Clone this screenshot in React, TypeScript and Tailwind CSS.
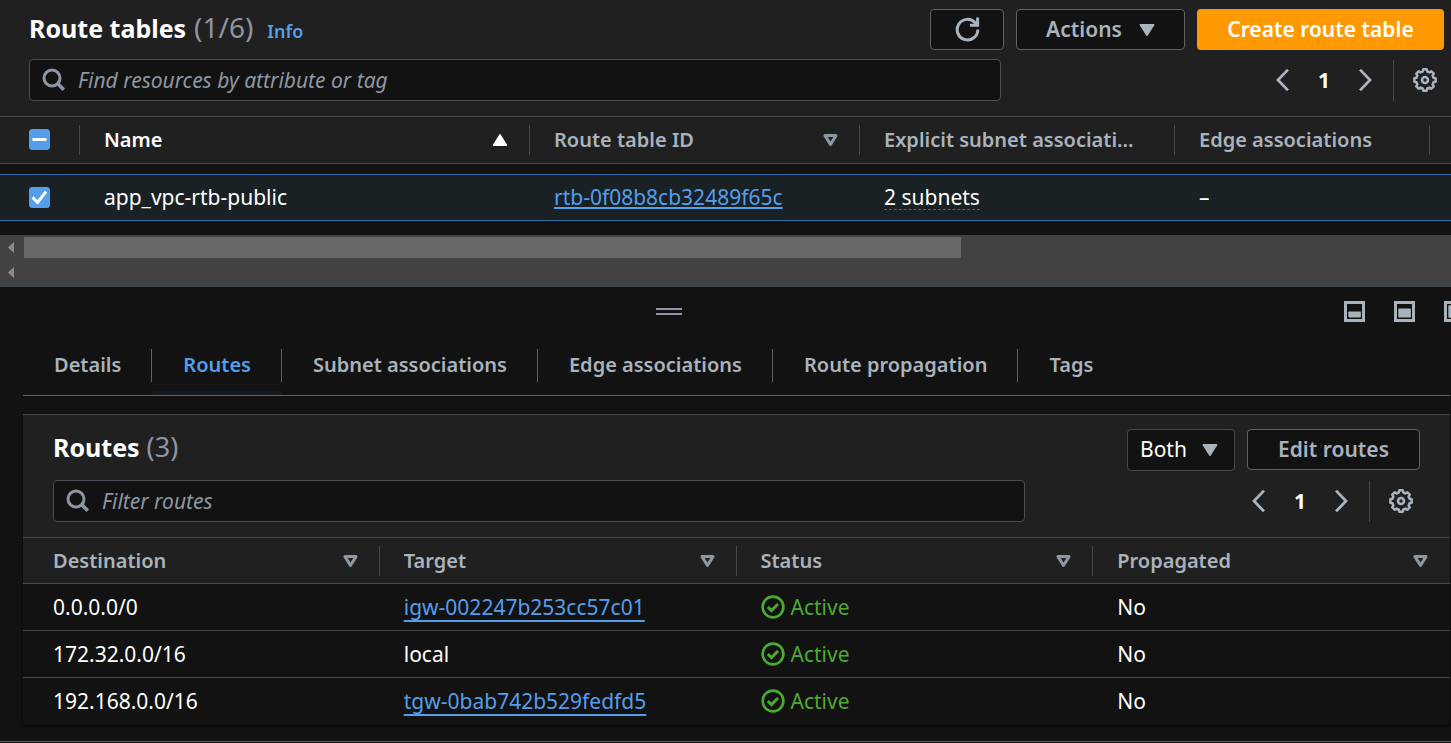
import { useEffect, useRef } from 'react';
import type { ReactNode } from 'react';

const GEAR_POINTS = Array.from({ length: 8 }, (_, i) => i * 45)
  .flatMap((a) => [
    [a - 9, 10.8],
    [a + 9, 10.8],
    [a + 15, 8.8],
    [a + 30, 8.8],
  ])
  .map(([deg, r]) => {
    const t = ((deg - 90) * Math.PI) / 180;
    return `${(12 + r * Math.cos(t)).toFixed(2)},${(12 + r * Math.sin(t)).toFixed(2)}`;
  })
  .join(' ');

function GearIcon() {
  return (
    <svg width="24" height="24" viewBox="0 0 24 24" fill="none" stroke="#a9b3bd" strokeWidth="2.5" strokeLinejoin="round" aria-hidden="true">
      <polygon points={GEAR_POINTS} />
      <circle cx="12" cy="12" r="3" strokeWidth="2.6" />
    </svg>
  );
}

function RefreshIcon() {
  return (
    <svg width="25" height="25" viewBox="0 0 25 25" fill="none" stroke="#a9b3bd" strokeWidth="3" aria-hidden="true">
      <path d="M22.8 12.5A10.3 10.3 0 1 1 20.2 5.8L22.4 8" />
      <path d="M22.6 0.6V8.2H15" />
    </svg>
  );
}

function SearchIcon() {
  return (
    <svg className="shrink-0" width="24" height="24" viewBox="0 0 24 24" fill="none" stroke="#8d96a3" strokeWidth="3" aria-hidden="true">
      <circle cx="10" cy="10" r="8" />
      <path d="M15.6 15.6L21.8 21.8" strokeWidth="3.6" />
    </svg>
  );
}

function Caret({ className = '' }: { className?: string }) {
  return (
    <svg className={className} width="16" height="14" viewBox="0 0 16 14" fill="#a9b3bd" stroke="#a9b3bd" strokeWidth="1.6" strokeLinejoin="round" aria-hidden="true">
      <path d="M1.4 1.8H14.6L8 12.2Z" />
    </svg>
  );
}

function SortIcon({ active = false }: { active?: boolean }) {
  return active ? (
    <svg className="shrink-0" width="16" height="14" viewBox="0 0 16 14" fill="#fff" stroke="#fff" strokeWidth="1.6" strokeLinejoin="round" aria-hidden="true">
      <path d="M1.6 12.2H14.4L8 1.8Z" />
    </svg>
  ) : (
    <svg className="shrink-0" width="15" height="14" viewBox="0 0 15 14" fill="none" stroke="#8d96a3" strokeWidth="3" strokeLinejoin="round" aria-hidden="true">
      <path d="M2 2.6H13L7.5 11.4Z" />
    </svg>
  );
}

function StatusIcon() {
  return (
    <svg className="shrink-0" width="24" height="24" viewBox="0 0 24 24" fill="none" stroke="#4caa31" strokeWidth="2.6" aria-hidden="true">
      <circle cx="12" cy="12" r="10.4" />
      <path d="M6.8 12L10.4 15.6L17 9" strokeWidth="2.9" />
    </svg>
  );
}

function Chevron({ dir }: { dir: 'left' | 'right' }) {
  return (
    <svg width="13" height="24" viewBox="0 0 13 24" fill="none" stroke="#a9b3bd" strokeWidth="2.8" aria-hidden="true">
      <path d={dir === 'left' ? 'M12 1.6L2 12L12 22.4' : 'M1 1.6L11 12L1 22.4'} />
    </svg>
  );
}

function PanelIcon({ top, height, label }: { top: number; height: number; label: string }) {
  return (
    <button type="button" aria-label={label} className="shrink-0">
      <svg width="21" height="21" viewBox="0 0 21 21" aria-hidden="true">
        <rect x="1.5" y="1.5" width="18" height="18" fill="none" stroke="#a9b3bd" strokeWidth="3" />
        <rect x="4.3" y={top} width="12.6" height={height} rx="0.8" fill="#a9b3bd" />
      </svg>
    </button>
  );
}

function Checkbox({ label, checked, mixed = false }: { label: string; checked?: boolean; mixed?: boolean }) {
  const ref = useRef<HTMLInputElement>(null);
  useEffect(() => {
    if (ref.current) ref.current.indeterminate = mixed;
  }, [mixed]);
  return (
    <span className="ml-[29px] grid w-[21px]">
      <input
        ref={ref}
        type="checkbox"
        aria-label={label}
        defaultChecked={checked}
        className="col-start-1 row-start-1 size-[21px] appearance-none rounded-[3px] border border-[#8d96a3] checked:border-[#539fec] checked:bg-[#539fec] indeterminate:border-[#539fec] indeterminate:bg-[#539fec]"
      />
      {(checked || mixed) && (
        <svg className="pointer-events-none col-start-1 row-start-1" width="21" height="21" viewBox="0 0 21 21" fill="none" stroke="#fff" strokeWidth="3" aria-hidden="true">
          <path d={mixed ? 'M3.5 10.5H17.5' : 'M3.6 10.4L8.6 15.4L17 4.6'} />
        </svg>
      )}
    </span>
  );
}

function SearchBox({ placeholder }: { placeholder: string }) {
  return (
    <label className="flex h-[42px] w-full max-w-[972px] items-center gap-3 rounded-sm border border-[#4a4d52] bg-[#121212] px-3">
      <SearchIcon />
      <input
        type="text"
        aria-label={placeholder}
        placeholder={placeholder}
        className="w-full bg-transparent text-[21px] leading-7 italic text-white outline-none placeholder:text-[#8d96a3] placeholder:opacity-100"
      />
    </label>
  );
}

function Pager() {
  return (
    <div className="flex shrink-0 items-center pr-[7px]">
      <button type="button" aria-label="Previous page">
        <Chevron dir="left" />
      </button>
      <button type="button" className="w-[70px] text-[21px] leading-7 font-bold text-white">
        1
      </button>
      <button type="button" aria-label="Next page">
        <Chevron dir="right" />
      </button>
      <div className="ml-[21px] h-[41px] border-l border-[#47494d] pl-[19px]" />
      <button type="button" aria-label="Preferences">
        <GearIcon />
      </button>
    </div>
  );
}

const BUTTON = 'flex h-[41px] items-center justify-center rounded-sm border border-[#5f6368] bg-[#121212] text-[21px] font-semibold text-[#a9b3bd]';

function HeaderCell({ children, first = false, sort, muted = true }: { children: ReactNode; first?: boolean; sort?: 'none' | 'asc'; muted?: boolean }) {
  return (
    <th scope="col" className="h-[46px] p-0 text-left font-semibold">
      <div
        className={`flex h-[30px] items-center justify-between gap-2 border-r border-[#47494d] ${first ? 'pl-[30px]' : 'pl-6'} ${sort ? 'pr-[21px]' : 'pr-4'} text-xl ${muted ? 'text-[#a9b3bd]' : 'text-white'}`}
      >
        <span className="truncate">{children}</span>
        {sort && <SortIcon active={sort === 'asc'} />}
      </div>
    </th>
  );
}

const TABS = ['Details', 'Routes', 'Subnet associations', 'Edge associations', 'Route propagation', 'Tags'];

const ROUTES = [
  { destination: '0.0.0.0/0', target: 'igw-002247b253cc57c01', link: true },
  { destination: '172.32.0.0/16', target: 'local', link: false },
  { destination: '192.168.0.0/16', target: 'tgw-0bab742b529fedfd5', link: true },
];

function ScrollArrow() {
  return (
    <svg width="6" height="11" viewBox="0 0 6 11" fill="#8b8b8b" aria-hidden="true">
      <path d="M6 0V11L0 5.5Z" />
    </svg>
  );
}

function RouteTables() {
  return (
    <section className="bg-[#202020]">
      <div className="flex flex-col gap-[9px] pt-[9px] pr-[7px] pb-[15px] pl-[29px]">
        <div className="flex items-start justify-between">
          <div className="flex items-baseline leading-9">
            <h1 className="text-[25px] font-bold text-white">Route tables</h1>
            <span className="ml-2 text-[28px] text-[#8d96a3]">(1/6)</span>
            <a href="#info" className="ml-3.5 text-lg font-semibold text-[#539fec]">
              Info
            </a>
          </div>
          <div className="flex gap-3">
            <button type="button" aria-label="Refresh" className={`${BUTTON} w-[74px]`}>
              <RefreshIcon />
            </button>
            <button type="button" className={`${BUTTON} w-[169px] gap-[17px]`}>
              Actions
              <Caret />
            </button>
            <button type="button" className="h-[41px] w-[247px] rounded-sm bg-[#ff9900] text-[21px] font-semibold text-white">
              Create route table
            </button>
          </div>
        </div>
        <div className="flex items-center justify-between">
          <SearchBox placeholder="Find resources by attribute or tag" />
          <Pager />
        </div>
      </div>
      <div className="h-[119px] overflow-hidden border-t border-[#47494d]">
        <table className="w-full table-fixed border-collapse">
          <colgroup>
            <col className="w-20" />
            <col className="w-[450px]" />
            <col className="w-[330px]" />
            <col className="w-[315px]" />
            <col className="w-[255px]" />
            <col />
          </colgroup>
          <thead>
            <tr className="border-b border-[#47494d]">
              <th scope="col" className="h-[46px] p-0">
                <div className="flex h-[30px] items-center border-r border-[#47494d]">
                  <Checkbox label="Select all route tables" mixed />
                </div>
              </th>
              <HeaderCell sort="asc" muted={false}>Name</HeaderCell>
              <HeaderCell sort="none">Route table ID</HeaderCell>
              <HeaderCell>Explicit subnet associati...</HeaderCell>
              <HeaderCell>Edge associations</HeaderCell>
              <td />
            </tr>
          </thead>
          <tbody className="bg-[#121212] text-[21px] leading-7 text-white">
            <tr className="h-[11px]">
              <td colSpan={6} className="p-0" />
            </tr>
            <tr className="border-y border-[#2f6aa3] bg-[#1a2124]">
              <td className="h-[46px] p-0">
                <Checkbox label="Select app_vpc-rtb-public" checked />
              </td>
              <td className="py-0 pr-0 pl-6">app_vpc-rtb-public</td>
              <td className="py-0 pr-0 pl-6">
                <a href="#rtb-0f08b8cb32489f65c" className="text-[#539fec] underline decoration-2 underline-offset-2 [text-decoration-skip-ink:none]">
                  rtb-0f08b8cb32489f65c
                </a>
              </td>
              <td className="py-0 pr-0 pl-6">
                <button type="button" className="border-b border-dashed border-[#5f6368] leading-6">
                  2 subnets
                </button>
              </td>
              <td className="py-0 pr-0 pl-6">–</td>
              <td />
            </tr>
            <tr>
              <td className="pt-3.5 pb-3 pl-0">
                <Checkbox label="Select next route table" />
              </td>
              <td colSpan={5} />
            </tr>
          </tbody>
        </table>
      </div>
      <div className="h-[52px] border-b-2 border-[#40474e] bg-[#424242]">
        <div className="flex h-[25px] items-center gap-2.5 pl-2">
          <ScrollArrow />
          <div className="h-[21px] w-[937px] bg-[#686868]" />
        </div>
        <div className="flex h-[25px] items-center pl-2">
          <ScrollArrow />
        </div>
      </div>
    </section>
  );
}

function RouteDetails() {
  return (
    <section className="bg-[#121212]">
      <div className="flex h-12 items-center">
        <div className="flex min-w-0 flex-1 justify-center">
          <button type="button" aria-label="Resize panel" className="flex h-[7px] w-[26px] flex-col justify-between">
            <span className="h-0.5 w-full bg-[#8d96a3]" />
            <span className="h-0.5 w-full bg-[#8d96a3]" />
          </button>
        </div>
        <div className="flex w-[113px] shrink-0 gap-[29px] overflow-hidden pl-1.5">
          <PanelIcon label="Small panel" top={10.4} height={6} />
          <PanelIcon label="Medium panel" top={7.4} height={9.2} />
          <PanelIcon label="Large panel" top={4.3} height={12.4} />
        </div>
      </div>
      <div className="pr-px pb-4 pl-[23px]">
        <div role="tablist" className="flex border-b border-[#5f6368] pt-3.5">
          {TABS.map((tab) => {
            const active = tab === 'Routes';
            return (
              <div key={tab} className={`group border-b-4 pb-[9px] ${active ? 'border-[#141a22]' : 'border-transparent'}`}>
                <button
                  type="button"
                  role="tab"
                  aria-selected={active}
                  className={`h-[33px] border-r border-[#5f6368] pr-[30px] pb-0.5 pl-[31px] text-xl font-semibold group-last:border-r-0 ${active ? 'text-[#539fec]' : 'text-[#a9b3bd]'}`}
                >
                  {tab}
                </button>
              </div>
            );
          })}
        </div>
        <div className="mt-[18px] border-t border-[#47494d] bg-[#202020] shadow-[0_1px_2px_#000000]">
          <div className="flex flex-col gap-[9px] px-[30px] pt-3.5 pb-[15px]">
            <div className="flex items-start justify-between">
              <div className="flex items-baseline leading-9">
                <h2 className="text-[25px] font-bold text-white">Routes</h2>
                <span className="ml-[7px] text-[27px] text-[#8d96a3]">(3)</span>
              </div>
              <div className="flex gap-3">
                <div className="grid items-center">
                  <select
                    aria-label="Route type"
                    className="col-start-1 row-start-1 h-[42px] w-[108px] appearance-none rounded-sm border border-[#47494d] bg-[#121212] pl-3 text-[21px] text-white"
                  >
                    <option>Both</option>
                  </select>
                  <Caret className="pointer-events-none col-start-1 row-start-1 mr-[17px] justify-self-end" />
                </div>
                <button type="button" className={`${BUTTON} w-[173px]`}>
                  Edit routes
                </button>
              </div>
            </div>
            <div className="flex items-center justify-between">
              <SearchBox placeholder="Filter routes" />
              <Pager />
            </div>
          </div>
          <table className="w-full table-fixed border-collapse border-t border-[#47494d]">
            <thead>
              <tr>
                <HeaderCell first sort="none">Destination</HeaderCell>
                <HeaderCell sort="none">Target</HeaderCell>
                <HeaderCell sort="none">Status</HeaderCell>
                <th scope="col" className="h-[46px] p-0 text-left text-xl font-semibold text-[#a9b3bd]">
                  <div className="flex items-center justify-between pr-[22px] pl-6">
                    Propagated
                    <SortIcon />
                  </div>
                </th>
              </tr>
            </thead>
            <tbody className="bg-[#121212] text-[21px] leading-7 text-white">
              {ROUTES.map((r) => (
                <tr key={r.destination} className="border-t border-[#47494d]">
                  <td className="h-[47px] py-0 pr-0 pl-[30px]">{r.destination}</td>
                  <td className="py-0 pr-0 pl-6">
                    {r.link ? (
                      <a href={`#${r.target}`} className="text-[#539fec] underline decoration-2 underline-offset-[5px] [text-decoration-skip-ink:none]">
                        {r.target}
                      </a>
                    ) : (
                      r.target
                    )}
                  </td>
                  <td className="py-0 pr-0 pl-6">
                    <span className="flex items-center gap-1.5 text-[#4caa31]">
                      <StatusIcon />
                      Active
                    </span>
                  </td>
                  <td className="py-0 pr-0 pl-6">No</td>
                </tr>
              ))}
            </tbody>
          </table>
        </div>
      </div>
      <div className="border-b border-[#5f5c66]" />
    </section>
  );
}

export default function App() {
  return (
    <main className="flex min-h-screen flex-col bg-[#121212] font-['Noto_Sans',sans-serif]">
      <RouteTables />
      <RouteDetails />
    </main>
  );
}
